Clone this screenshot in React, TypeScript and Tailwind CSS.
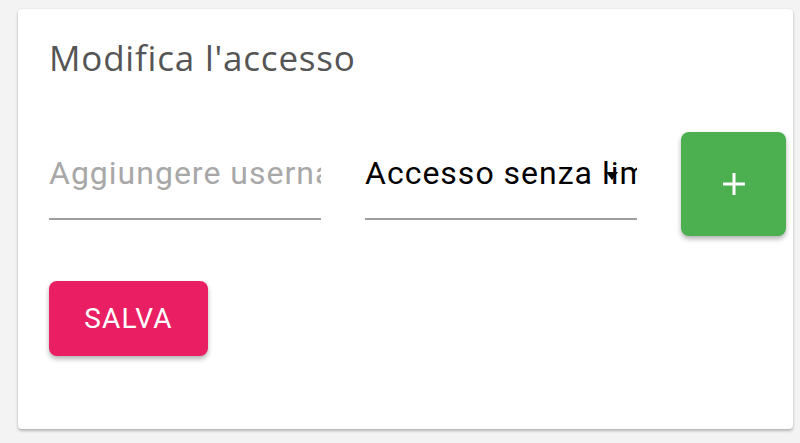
import React from "react";

export default function App() {
  return (
    <div className="w-[800px] h-[443px] bg-[#f3f3f3] overflow-hidden pt-[9px] pl-[18px]">
      <div className="w-[775px] h-[420px] bg-white rounded-[4px] shadow-[0_2px_3px_rgba(0,0,0,0.25),0_0_2px_rgba(0,0,0,0.08)] pl-[31px] pt-[27px]">
        <h1
          className="text-[35px] leading-[44px] tracking-[0.8px] text-[#555555] font-normal"
          style={{ fontFamily: '"Open Sans", sans-serif' }}
        >
          Modifica l'accesso
        </h1>
        <div className="flex items-start mt-[52px] gap-[44px]" style={{ fontFamily: 'Roboto, sans-serif' }}>
          <div className="w-[272px] mt-[17px] pb-[21px] border-b-2 border-[#9e9e9e]">
            <input
              className="w-full h-[48px] leading-[48px] text-[32px] tracking-[1px] outline-none bg-transparent placeholder:text-[#a8a8a8]"
              placeholder="Aggiungere username"
            />
          </div>
          <div className="relative w-[272px] mt-[17px] pb-[21px] border-b-2 border-[#9e9e9e]">
            <div className="h-[48px] leading-[48px] text-[32px] tracking-[1px] text-black whitespace-nowrap overflow-hidden">
              Accesso senza limiti
            </div>
            <svg className="absolute right-[19px] top-[23px]" width="12" height="8" viewBox="0 0 12 8">
              <path d="M0 0 L12 0 L6 8 Z" fill="#000" />
            </svg>
          </div>
          <button className="w-[105px] h-[104px] bg-[#4caf50] rounded-[8px] shadow-[0_3px_5px_rgba(0,0,0,0.3)] flex items-center justify-center">
            <svg width="24" height="24" viewBox="0 0 24 24">
              <path d="M12 1 V23 M1 12 H23" stroke="#fff" strokeWidth="3" />
            </svg>
          </button>
        </div>
        <button
          className="mt-[45px] w-[159px] h-[75px] bg-[#e91e63] rounded-[8px] shadow-[0_3px_5px_rgba(0,0,0,0.3)] text-white text-[28px] tracking-[1.2px]"
          style={{ fontFamily: 'Roboto, sans-serif' }}
        >
          SALVA
        </button>
      </div>
    </div>
  );
}
